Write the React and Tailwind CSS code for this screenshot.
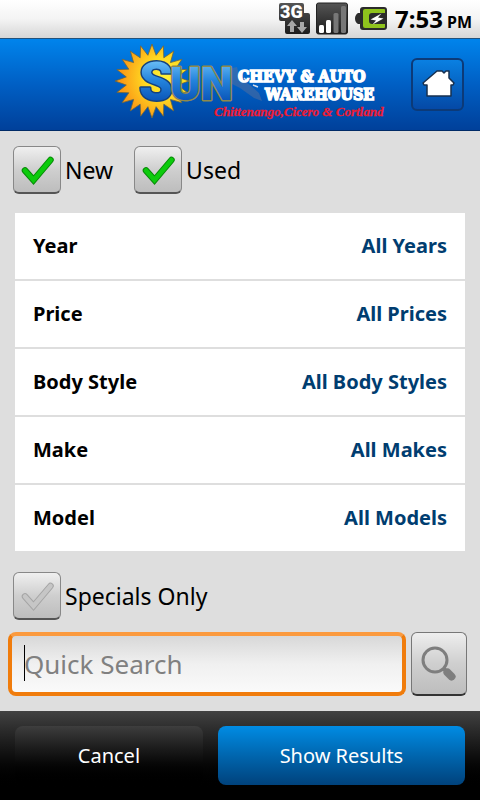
import { useState } from "react";

const filters = [
  { label: "Year", value: "All Years" },
  { label: "Price", value: "All Prices" },
  { label: "Body Style", value: "All Body Styles" },
  { label: "Make", value: "All Makes" },
  { label: "Model", value: "All Models" },
];

// Points of the sun's outline, alternating between ray tip and base
function sunPoints(cx, cy, outer, inner, rays) {
  const points = [];
  for (let i = 0; i < rays * 2; i++) {
    const r = i % 2 === 0 ? outer : inner;
    const a = (Math.PI * i) / rays - Math.PI / 2;
    points.push(`${(cx + r * Math.cos(a)).toFixed(1)},${(cy + r * Math.sin(a)).toFixed(1)}`);
  }
  return points.join(" ");
}

function StatusBar() {
  return (
    <div className="flex h-[38px] items-center justify-end gap-1 bg-linear-to-b from-white via-[#f4f4f4] to-[#d6d6d6] pr-2">
      {/* 3G data */}
      <svg width="34" height="34" viewBox="0 0 34 34" aria-label="3G">
        <defs>
          <linearGradient id="dark" x1="0" y1="0" x2="0" y2="1">
            <stop offset="0" stopColor="#555" />
            <stop offset="1" stopColor="#1c1c1c" />
          </linearGradient>
        </defs>
        <path
          d="M4 1h21q2 0 2 2v8h4q2 0 2 2v17q0 2-2 2H10q-2 0-2-2V19H4q-2 0-2-2V3q0-2 2-2z"
          fill="url(#dark)"
        />
        <text x="3" y="16" fontSize="18" fontWeight="900" fontFamily="Roboto, sans-serif" fill="#fff">
          3G
        </text>
        <path d="M15 18l5 6h-3v6h-4v-6h-3z" fill="#a8a8a8" />
        <path d="M25 31l-5-6h3v-5h4v5h3z" fill="#a8a8a8" />
      </svg>
      {/* Signal */}
      <svg width="34" height="34" viewBox="0 0 34 34" aria-label="Signal">
        <rect x="1.500" y="1" width="31" height="31" rx="2" fill="url(#dark)" stroke="#222" />
        <rect x="4" y="23" width="5" height="8" rx="1.500" fill="#fff" />
        <rect x="11" y="18" width="5" height="13" rx="1.500" fill="#fff" />
        <rect x="18.500" y="11" width="5" height="20" rx="1.500" fill="#777" />
        <rect x="26" y="4" width="5" height="27" rx="1.500" fill="#777" />
      </svg>
      {/* Battery */}
      <svg width="34" height="34" viewBox="0 0 34 34" aria-label="Charging">
        <path
          d="M10 5h21q3 0 3 3v17q0 3-3 3H10q-3 0-3-3v-3H5q-3-2-3-5.500T5 11h2V8q0-3 3-3z"
          fill="#2b2b2b"
        />
        <path
          d="M12 7h19q1 0 1 1v3H19q-3 0-3 3v5q0 3 3 3h13v3q0 1-1 1H12q-2 0-2-2V9q0-2 2-2z"
          fill="#8fc31d"
        />
        <path d="M28.500 11.500l-11 6 5.500 1-3.500 4 11-6-5.500-1z" fill="#fff" />
      </svg>
      <div className="flex items-baseline gap-1 pl-1 font-bold text-black">
        <span className="text-2xl">7:53</span>
        <span className="text-base">PM</span>
      </div>
    </div>
  );
}

function Logo() {
  return (
    <svg width="276" height="92" viewBox="114 39 276 92" role="img" aria-label="Sun Chevy & Auto Warehouse">
      <defs>
        <radialGradient id="sun" cx="0.680" cy="0.450" r="0.600">
          <stop offset="0" stopColor="#fff23a" />
          <stop offset="0.450" stopColor="#ffdb22" />
          <stop offset="1" stopColor="#fb9a16" />
        </radialGradient>
        <linearGradient id="letters" gradientUnits="userSpaceOnUse" x1="0" y1="60" x2="0" y2="101">
          <stop offset="0" stopColor="#6cc0f7" />
          <stop offset="0.500" stopColor="#2483dc" />
          <stop offset="1" stopColor="#0a55b8" />
        </linearGradient>
      </defs>
      <polygon points={sunPoints(151, 81, 37, 26, 20)} fill="url(#sun)" stroke="#6b6440" strokeWidth="0.800" />
      {/* Map outline behind the name */}
      <path d="M231 68l5-1 3 12 10 6 9 8 3 8-8-3-14-10-8-4z" fill="#5a7099" opacity="0.500" />
      <path d="M252 85l5 2M243 78l3 3" stroke="#d5dce8" strokeWidth="1.500" />
      <text
        y="100"
        fontFamily="Roboto, sans-serif"
        fontWeight="900"
        fill="url(#letters)"
        stroke="#15427e"
        strokeWidth="3"
        strokeLinejoin="round"
        paintOrder="stroke"
      >
        <tspan x="138" fontSize="54">S</tspan>
        <tspan x="169" fontSize="46" stroke="#8f8a4c">UN</tspan>
      </text>
      <g
        fontFamily="DejaVu Serif Condensed, DejaVu Serif, serif"
        fontWeight="bold"
        fill="#fff"
        stroke="#fff"
        strokeWidth="1.500"
      >
        <text x="237" y="82" fontSize="16">CHEVY &amp; AUTO</text>
        <text x="264" y="100" fontSize="16">WAREHOUSE</text>
      </g>
      <text
        x="213"
        y="116"
        fontSize="13"
        fontFamily="Liberation Serif, serif"
        fontStyle="italic"
        fontWeight="bold"
        fill="#ee1c34"
        stroke="#ee1c34"
        strokeWidth="0.300"
      >
        Chittenango,Cicero &amp; Cortland
      </text>
    </svg>
  );
}

function Header() {
  return (
    <header className="flex h-[93px] items-center justify-end gap-5 border-y border-t-[#22527c] border-b-[#002a66] bg-linear-to-b from-[#0084ec] via-[#005fc4] to-[#00409a] pr-4">
      <Logo />
      <button
        type="button"
        aria-label="Home"
        className="flex size-[53px] items-center justify-center rounded-md border-2 border-[#0c3a78] bg-linear-to-b from-[#0a80e2] to-[#0549a6]"
      >
        <svg width="34" height="32" viewBox="0 0 34 32">
          <path
            d="M16 2L2 14l1 2h3v11h24V16h2l1-2-5-5V2h-3l-2 2-2-2z"
            fill="#fff"
            stroke="#17304f"
            strokeWidth="1.500"
            strokeLinejoin="round"
          />
        </svg>
      </button>
    </header>
  );
}

function CheckOption({ id, label, checked, onChange }) {
  return (
    <div className="flex items-center gap-1">
      <span className="relative size-12">
        <input
          id={id}
          type="checkbox"
          checked={checked}
          onChange={onChange}
          className="block size-12 appearance-none rounded-md border border-[#888] border-b-2 border-b-[#555] bg-linear-to-b from-[#f0f0f0] via-[#cfcfcf] to-[#bdbdbd]"
        />
        <svg className="pointer-events-none absolute inset-0" width="48" height="48" viewBox="0 0 48 48">
          <path
            d="M12 24.500L20.500 34L37.500 14"
            fill="none"
            stroke={checked ? "#078a07" : "#a5a5a5"}
            strokeWidth="6.500"
            strokeLinecap="round"
          />
          <path
            d="M12 24.500L20.500 34L37.500 14"
            fill="none"
            stroke={checked ? "#0ccb0c" : "#c6c6c6"}
            strokeWidth="4.500"
            strokeLinecap="round"
          />
        </svg>
      </span>
      <label htmlFor={id} className="text-[23px] text-black">
        {label}
      </label>
    </div>
  );
}

export default function App() {
  const [showNew, setShowNew] = useState(true);
  const [showUsed, setShowUsed] = useState(true);
  const [specials, setSpecials] = useState(false);
  const [query, setQuery] = useState("");

  return (
    <div className="flex min-h-screen flex-col bg-[#dedede] font-['Noto_Sans','Open_Sans',sans-serif]">
      <StatusBar />
      <Header />

      <main className="flex-1">
        {/* Condition */}
        <div className="flex gap-[21px] px-[13px] pt-[15px]">
          <CheckOption id="new" label="New" checked={showNew} onChange={() => setShowNew(!showNew)} />
          <CheckOption id="used" label="Used" checked={showUsed} onChange={() => setShowUsed(!showUsed)} />
        </div>

        {/* Filters */}
        <ul className="mx-[15px] mt-[19px] flex flex-col gap-0.5">
          {filters.map((f) => (
            <li key={f.label}>
              <button
                type="button"
                className="flex h-[66px] w-full items-center justify-between bg-white px-[18px] text-xl font-bold"
              >
                <span className="text-black">{f.label}</span>
                <span className="text-[#003d70]">{f.value}</span>
              </button>
            </li>
          ))}
        </ul>

        {/* Search */}
        <div className="px-[13px] pt-[21px]">
          <CheckOption
            id="specials"
            label="Specials Only"
            checked={specials}
            onChange={() => setSpecials(!specials)}
          />
        </div>
        <form className="flex gap-[5px] pt-3 pr-[13px] pl-2" onSubmit={(e) => e.preventDefault()}>
          <div className="relative min-w-0 flex-1">
            <input
              type="text"
              aria-label="Quick Search"
              placeholder="Quick Search"
              value={query}
              onChange={(e) => setQuery(e.target.value)}
              className="h-16 w-full rounded-lg border-4 border-[#f07c0c] border-t-[#fb9a3e] bg-linear-to-b from-[#d8d8d8] via-[#f0f0f0] to-[#fafafa] px-3 text-[26px] text-black outline-none placeholder:text-[#808080]"
            />
            {/* Text cursor */}
            <span className="absolute top-[13px] left-4 h-9 w-px bg-black" />
          </div>
          <button
            type="submit"
            aria-label="Search"
            className="flex h-16 w-14 items-center justify-center rounded-md border border-[#777] border-b-2 border-b-[#333] bg-linear-to-b from-[#eee] via-[#cfcfcf] to-[#bdbdbd]"
          >
            <svg width="36" height="36" viewBox="0 0 36 36" fill="none" stroke="#7e7e7e">
              <circle cx="14" cy="14" r="12" strokeWidth="3" />
              <path d="M22 22l4 4" strokeWidth="4" />
              <path d="M26.500 26.500l4 4" strokeWidth="8" strokeLinecap="round" />
            </svg>
          </button>
        </form>
      </main>

      {/* Actions */}
      <footer className="mt-[15px] flex gap-[15px] bg-linear-to-b from-[#424242] to-black to-90% p-[15px] text-xl text-white">
        <button
          type="button"
          className="h-[59px] flex-19 rounded-lg bg-linear-to-b from-[#3e3e3e] to-black"
        >
          Cancel
        </button>
        <button
          type="submit"
          className="h-[59px] flex-25 rounded-lg bg-linear-to-b from-[#008ce4] to-[#00427c]"
        >
          Show Results
        </button>
      </footer>
    </div>
  );
}
